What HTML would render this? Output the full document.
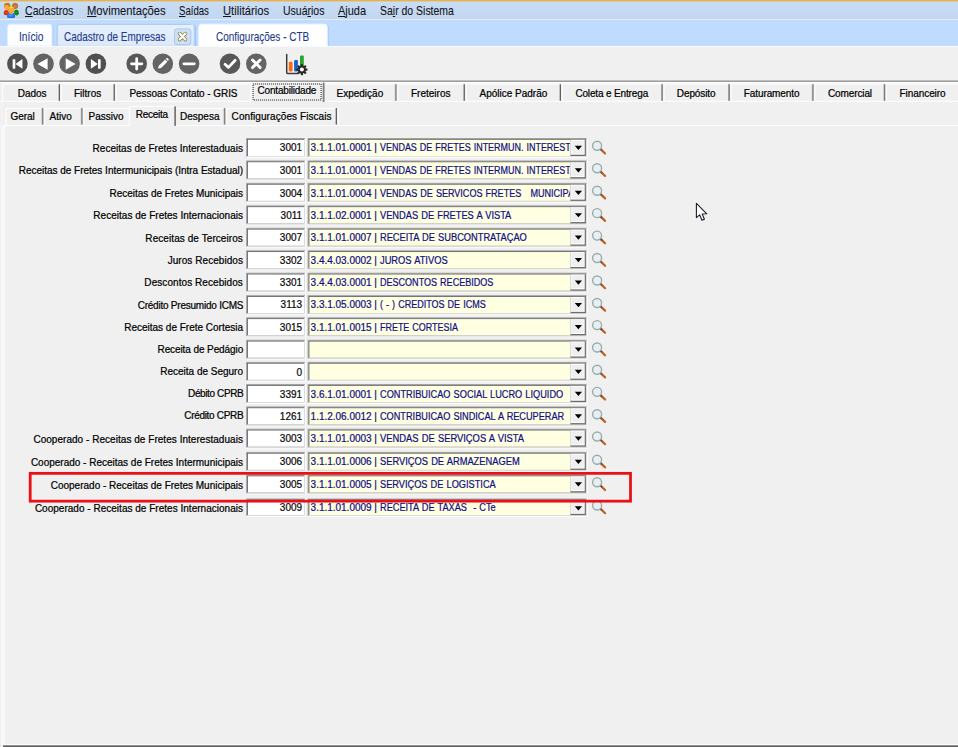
<!DOCTYPE html><html lang="pt-BR"><head><meta charset="utf-8"><title>Configurações - CTB</title><style>
*{box-sizing:border-box;margin:0;padding:0}
html,body{width:958px;height:747px;overflow:hidden;background:#f0f0f0}
body{position:relative;font-family:"Liberation Sans",sans-serif;font-size:10px;color:#000;-webkit-text-stroke:0.22px currentColor}
.a{position:absolute}
#g{position:absolute;left:0;top:0}
.m{-webkit-text-stroke:0.1px currentColor;position:absolute;top:4px;font-size:12.4px;line-height:14px;height:14px;white-space:pre;color:#15151c;transform-origin:0 0}
.m u{text-decoration:underline;text-underline-offset:1px}
.tt{-webkit-text-stroke:0.1px currentColor;position:absolute;top:29.6px;font-size:11.9px;line-height:14px;height:14px;white-space:pre;color:#1f3a8a;transform-origin:0 0}
.ot{position:absolute;font-size:10px;line-height:12px;white-space:pre}
.lbl{position:absolute;right:715px;text-align:right;white-space:pre;line-height:12px;height:12px;font-size:10px}
.nt{position:absolute;right:655.9px;text-align:right;white-space:pre;line-height:12px;height:12px;font-size:10px;color:#0a0a0a}
.nm{display:inline-block;transform-origin:0 50%;word-spacing:0.6px}
.tx{position:absolute;left:310.6px;line-height:12px;font-size:10px;color:#10108a;white-space:pre;width:259.2px;overflow:hidden;height:13px}
</style></head><body>
<svg id="g" width="958" height="747" viewBox="0 0 958 747">
<defs><linearGradient id="mg" x1="0" y1="0" x2="0" y2="1"><stop offset="0" stop-color="#c9ddf4"/><stop offset="1" stop-color="#c1d7f0"/></linearGradient><linearGradient id="tg" x1="0" y1="0" x2="0" y2="1"><stop offset="0" stop-color="#e6f0fd"/><stop offset="1" stop-color="#dce9fa"/></linearGradient><radialGradient id="go" cx="40%" cy="35%" r="70%"><stop offset="0" stop-color="#ffc04a"/><stop offset="1" stop-color="#d8831c"/></radialGradient><radialGradient id="gb" cx="40%" cy="35%" r="70%"><stop offset="0" stop-color="#d89a50"/><stop offset="1" stop-color="#b87028"/></radialGradient><linearGradient id="hg" x1="0" y1="0" x2="1" y2="1"><stop offset="0" stop-color="#5a3212"/><stop offset=".35" stop-color="#b05a1c"/><stop offset="1" stop-color="#c2641e"/></linearGradient><g id="mag"><path d="M9.7 11.3 L14.1 15.5" stroke="url(#hg)" stroke-width="2.2" stroke-linecap="round"/><circle cx="6.1" cy="7.8" r="4.5" fill="#e9eff1" stroke="#98adaf" stroke-width="1.4"/></g></defs>
<rect x="0.00" y="1.30" width="958.00" height="18.20" fill="url(#mg)"/>
<rect x="0.00" y="0.00" width="958.00" height="1.50" fill="#e2b255"/>
<rect x="0.00" y="19.00" width="958.00" height="1.00" fill="#e8ebf1"/>
<rect x="0.00" y="20.00" width="958.00" height="26.00" fill="#bfdbff"/>
<g>
<defs>
<radialGradient id="rh1" cx="38%" cy="62%" r="65%"><stop offset="0" stop-color="#ffb848"/><stop offset=".55" stop-color="#f09a28"/><stop offset="1" stop-color="#b87010"/></radialGradient>
<radialGradient id="rh2" cx="50%" cy="55%" r="60%"><stop offset="0" stop-color="#d08a3c"/><stop offset="1" stop-color="#a8682a"/></radialGradient>
<radialGradient id="rh3" cx="50%" cy="60%" r="60%"><stop offset="0" stop-color="#ffb44a"/><stop offset="1" stop-color="#ee9426"/></radialGradient>
<radialGradient id="rr" cx="55%" cy="50%" r="60%"><stop offset="0" stop-color="#ff4412"/><stop offset="1" stop-color="#cc1c08"/></radialGradient>
<radialGradient id="rg" cx="45%" cy="50%" r="60%"><stop offset="0" stop-color="#1c9a24"/><stop offset="1" stop-color="#0a7412"/></radialGradient>
<radialGradient id="rb" cx="45%" cy="45%" r="65%"><stop offset="0" stop-color="#46a2ff"/><stop offset="1" stop-color="#0a62d8"/></radialGradient>
</defs>
<path d="M3.8 13.4 Q3.6 10 6.4 9.9 Q9 10 9 13 Q8.8 15.4 6.4 15.3 Q4 15.2 3.8 13.4Z" fill="url(#rr)"/>
<path d="M14 13 Q14 9.8 16.4 9.7 Q18.9 9.9 18.8 13.2 Q18.6 15.5 16.4 15.5 Q14.2 15.4 14 13Z" fill="url(#rg)"/>
<circle cx="7.1" cy="6.2" r="3.2" fill="url(#rh1)"/>
<path d="M4 5.6 Q4.4 3 7.1 3 Q9.9 3 10.3 5.8 Q8.6 4.4 6.6 5 Q5 5.4 4 5.6Z" fill="#b8700e" opacity=".75"/>
<circle cx="15.1" cy="6.1" r="3.05" fill="url(#rh2)"/>
<path d="M7.1 17.4 Q6.8 13.4 9.2 13 L11.2 14.2 L13.2 13 Q15.4 13.4 15 17.4 Q11 18.6 7.1 17.4Z" fill="url(#rb)"/>
<path d="M10 12 L12.4 12 L12.2 13.3 L11.2 14.2 L10.2 13.3Z" fill="#f6a030"/>
<circle cx="11.2" cy="9.7" r="3.2" fill="url(#rh3)"/>
<path d="M8.2 8.9 Q8.6 6.7 11.2 6.6 Q13.6 6.7 14.1 8.6 Q11.2 7.4 8.2 8.9Z" fill="#f8dc14"/>
</g>
<path d="M9.20 46 V27.40 Q9.20 24.80 11.80 24.80 H51.00 Q53.60 24.80 53.60 27.40 V46Z" fill="#a9c9f5"/>
<path d="M7.60 46 V26.80 Q7.60 24.20 10.20 24.20 H49.40 Q52.00 24.20 52.00 26.80 V46Z" fill="#fdfeff" stroke="#e2eefc" stroke-width="1"/>
<path d="M59.20 46 V27.40 Q59.20 24.80 61.80 24.80 H193.40 Q196.00 24.80 196.00 27.40 V46Z" fill="#9fc3f5"/>
<path d="M57.20 46 V26.80 Q57.20 24.20 59.80 24.20 H191.40 Q194.00 24.20 194.00 26.80 V46Z" fill="url(#tg)" stroke="#c6dcf8" stroke-width="1"/>
<path d="M57.2 46 V26.8 Q57.2 24.4 59.8 24.4 H191.4" fill="none" stroke="#aac9f0" stroke-width="1"/>
<path d="M200.40 46 V27.40 Q200.40 24.80 203.00 24.80 H326.20 Q328.80 24.80 328.80 27.40 V46Z" fill="#a9c9f5"/>
<path d="M198.80 46 V26.80 Q198.80 24.20 201.40 24.20 H324.60 Q327.20 24.20 327.20 26.80 V46Z" fill="#ffffff" stroke="#eef8fd" stroke-width="1"/>
<rect x="174.6" y="28.9" width="16.2" height="15.8" rx="2.4" fill="#cfe0f6" stroke="#a9c6ec" stroke-width="1"/>
<g transform="translate(176 30)"><path d="M3.6 3.6 L9.4 9.6 M9.4 3.6 L3.6 9.6" stroke="#8f8658" stroke-width="3.7" stroke-linecap="round"/><path d="M3.6 3.6 L9.4 9.6 M9.4 3.6 L3.6 9.6" stroke="#fffef4" stroke-width="2.1" stroke-linecap="round"/></g>
<g transform="translate(7.1 53.5)"><circle cx="10.3" cy="10.3" r="10.3" fill="#505050"/><g transform="translate(10.3 10.3) scale(0.95) translate(-10.3 -10.3)"><rect x="5.3" y="5.4" width="2.8" height="10" rx=".6" fill="#fff"/><path d="M8.3 10.4 L15.6 5.2 L15.6 15.6Z" fill="#fff"/></g></g>
<g transform="translate(33.2 53.5)"><circle cx="10.3" cy="10.3" r="10.3" fill="#646464"/><g transform="translate(10.3 10.3) scale(1.06) translate(-10.3 -10.3)"><path d="M4.6 10.4 L14.2 5 L14.2 15.8Z" fill="#fff"/></g></g>
<g transform="translate(59.3 53.5)"><circle cx="10.3" cy="10.3" r="10.3" fill="#646464"/><g transform="translate(10.3 10.3) scale(1.06) translate(-10.3 -10.3)"><path d="M16 10.4 L6.6 5 L6.6 15.8Z" fill="#fff"/></g></g>
<g transform="translate(85.6 53.5)"><circle cx="10.3" cy="10.3" r="10.3" fill="#505050"/><g transform="translate(10.3 10.3) scale(0.95) translate(-10.3 -10.3)"><rect x="12.5" y="5.4" width="2.8" height="10" rx=".6" fill="#fff"/><path d="M12.3 10.4 L5 5.2 L5 15.6Z" fill="#fff"/></g></g>
<g transform="translate(126.4 53.5)"><circle cx="10.3" cy="10.3" r="10.3" fill="#585858"/><g transform="translate(10.3 10.3) scale(1.02) translate(-10.3 -10.3)"><path d="M10.3 5.2V15.4M5.2 10.3H15.4" stroke="#fff" stroke-width="2.7" stroke-linecap="round"/></g></g>
<g transform="translate(152.5 53.5)"><circle cx="10.3" cy="10.3" r="10.3" fill="#646464"/><g transform="translate(10.3 10.3) scale(1.02) translate(-10.3 -10.3)"><path d="M5.6 15 L6.4 12.2 L12.6 6 L14.8 8.2 L8.6 14.4Z" fill="#fff"/><path d="M13.2 5.4 L14 4.7 Q14.6 4.3 15.2 4.9 L15.9 5.6 Q16.4 6.2 15.9 6.8 L15.3 7.5Z" fill="#fff"/></g></g>
<g transform="translate(178.8 53.5)"><circle cx="10.3" cy="10.3" r="10.3" fill="#646464"/><g transform="translate(10.3 10.3) scale(1.02) translate(-10.3 -10.3)"><path d="M5.2 10.3H15.4" stroke="#fff" stroke-width="2.7" stroke-linecap="round"/></g></g>
<g transform="translate(219.7 53.5)"><circle cx="10.3" cy="10.3" r="10.3" fill="#585858"/><g transform="translate(10.3 10.3) scale(1.02) translate(-10.3 -10.3)"><path d="M5.4 10.8 L8.8 13.8 L15.4 6.8" stroke="#fff" stroke-width="2.7" fill="none" stroke-linecap="round" stroke-linejoin="round"/></g></g>
<g transform="translate(246.0 53.5)"><circle cx="10.3" cy="10.3" r="10.3" fill="#646464"/><g transform="translate(10.3 10.3) scale(1.02) translate(-10.3 -10.3)"><path d="M6.6 6.6 L14 14 M14 6.6 L6.6 14" stroke="#fff" stroke-width="2.9" stroke-linecap="round"/></g></g>
<g>
<path d="M286.7 54.4 V72.6 Q286.7 73.4 287.5 73.4 H298" stroke="#3a3a3a" stroke-width="1.5" fill="none" stroke-linecap="round"/>
<rect x="288.8" y="61.8" width="3.8" height="9.6" rx="1" fill="#ff6a10"/>
<rect x="294.1" y="60" width="3.8" height="11.4" rx="1" fill="#1464c8"/>
<rect x="300" y="55.6" width="3.8" height="11" rx="1" fill="#2ea32e"/>
<g transform="translate(301.9 69.6)" fill="#2a2a2a">
<circle r="4" />
<g id="tth"><rect x="-1.1" y="-5.6" width="2.2" height="11.2" rx=".4"/></g>
<use href="#tth" transform="rotate(45)"/><use href="#tth" transform="rotate(90)"/><use href="#tth" transform="rotate(135)"/>
<circle r="2" fill="#fff"/>
</g></g>
<rect x="0.00" y="80.40" width="958.00" height="1.60" fill="#9e9e9e"/>
<rect x="0.00" y="82.00" width="958.00" height="1.00" fill="#fff"/>
<rect x="0.00" y="46.00" width="958.00" height="1.00" fill="#f9fbfe"/>
<rect x="2.50" y="83.40" width="248.00" height="1.00" fill="#fff"/>
<rect x="324.00" y="83.40" width="634.00" height="1.00" fill="#fff"/>
<rect x="2.20" y="83.80" width="1.00" height="17.40" fill="#fff"/>
<rect x="0.00" y="100.80" width="251.00" height="1.00" fill="#fff"/>
<rect x="324.00" y="100.80" width="634.00" height="1.00" fill="#fff"/>
<rect x="250.60" y="82.00" width="72.40" height="1.00" fill="#fff"/>
<rect x="250.40" y="82.20" width="1.00" height="19.60" fill="#fff"/>
<rect x="322.60" y="82.60" width="0.80" height="19.40" fill="#a0a0a0"/>
<rect x="323.30" y="82.60" width="1.10" height="19.40" fill="#5a5a5a"/>
<rect x="253.1" y="84" width="68" height="16" fill="none" stroke="#222" stroke-width="1" stroke-dasharray="1 1"/>
<rect x="58.30" y="84.20" width="0.80" height="16.60" fill="#adadad"/>
<rect x="59.00" y="84.20" width="1.00" height="16.60" fill="#626262"/>
<rect x="61.00" y="84.60" width="0.90" height="16.20" fill="#fdfdfd"/>
<rect x="113.20" y="84.20" width="0.80" height="16.60" fill="#adadad"/>
<rect x="113.90" y="84.20" width="1.00" height="16.60" fill="#626262"/>
<rect x="115.90" y="84.60" width="0.90" height="16.20" fill="#fdfdfd"/>
<rect x="394.80" y="84.20" width="0.80" height="16.60" fill="#adadad"/>
<rect x="395.50" y="84.20" width="1.00" height="16.60" fill="#626262"/>
<rect x="397.50" y="84.60" width="0.90" height="16.20" fill="#fdfdfd"/>
<rect x="463.20" y="84.20" width="0.80" height="16.60" fill="#adadad"/>
<rect x="463.90" y="84.20" width="1.00" height="16.60" fill="#626262"/>
<rect x="465.90" y="84.60" width="0.90" height="16.20" fill="#fdfdfd"/>
<rect x="559.30" y="84.20" width="0.80" height="16.60" fill="#adadad"/>
<rect x="560.00" y="84.20" width="1.00" height="16.60" fill="#626262"/>
<rect x="562.00" y="84.60" width="0.90" height="16.20" fill="#fdfdfd"/>
<rect x="661.00" y="84.20" width="0.80" height="16.60" fill="#adadad"/>
<rect x="661.70" y="84.20" width="1.00" height="16.60" fill="#626262"/>
<rect x="663.70" y="84.60" width="0.90" height="16.20" fill="#fdfdfd"/>
<rect x="728.00" y="84.20" width="0.80" height="16.60" fill="#adadad"/>
<rect x="728.70" y="84.20" width="1.00" height="16.60" fill="#626262"/>
<rect x="730.70" y="84.60" width="0.90" height="16.20" fill="#fdfdfd"/>
<rect x="811.80" y="84.20" width="0.80" height="16.60" fill="#adadad"/>
<rect x="812.50" y="84.20" width="1.00" height="16.60" fill="#626262"/>
<rect x="814.50" y="84.60" width="0.90" height="16.20" fill="#fdfdfd"/>
<rect x="883.50" y="84.20" width="0.80" height="16.60" fill="#adadad"/>
<rect x="884.20" y="84.20" width="1.00" height="16.60" fill="#626262"/>
<rect x="886.20" y="84.60" width="0.90" height="16.20" fill="#fdfdfd"/>
<rect x="5.80" y="108.00" width="123.00" height="1.00" fill="#fff"/>
<rect x="176.00" y="108.00" width="161.00" height="1.00" fill="#fff"/>
<rect x="5.40" y="108.20" width="1.00" height="17.00" fill="#fff"/>
<rect x="3.60" y="125.00" width="125.40" height="1.00" fill="#fff"/>
<rect x="176.00" y="125.00" width="782.00" height="1.00" fill="#fff"/>
<rect x="3.50" y="125.00" width="1.00" height="620.00" fill="#fff"/>
<rect x="129.00" y="105.90" width="45.40" height="1.00" fill="#fff"/>
<rect x="128.80" y="106.10" width="1.00" height="19.60" fill="#fff"/>
<rect x="174.00" y="106.40" width="0.80" height="19.40" fill="#a0a0a0"/>
<rect x="174.70" y="106.40" width="1.10" height="19.40" fill="#5a5a5a"/>
<rect x="41.60" y="108.00" width="0.80" height="16.60" fill="#adadad"/>
<rect x="42.30" y="108.00" width="1.00" height="16.60" fill="#626262"/>
<rect x="44.30" y="108.40" width="0.90" height="16.20" fill="#fdfdfd"/>
<rect x="80.80" y="108.00" width="0.80" height="16.60" fill="#adadad"/>
<rect x="81.50" y="108.00" width="1.00" height="16.60" fill="#626262"/>
<rect x="83.50" y="108.40" width="0.90" height="16.20" fill="#fdfdfd"/>
<rect x="223.60" y="108.00" width="0.80" height="16.60" fill="#adadad"/>
<rect x="224.30" y="108.00" width="1.00" height="16.60" fill="#626262"/>
<rect x="226.30" y="108.40" width="0.90" height="16.20" fill="#fdfdfd"/>
<rect x="335.30" y="108.00" width="0.80" height="16.60" fill="#adadad"/>
<rect x="336.00" y="108.00" width="1.00" height="16.60" fill="#626262"/>
<rect x="338.00" y="108.40" width="0.90" height="16.20" fill="#fdfdfd"/>
<rect x="0.00" y="102.00" width="0.60" height="645.00" fill="#dedede"/>
<rect x="0.60" y="102.00" width="0.80" height="643.00" fill="#fff"/>
<rect x="1.40" y="126.00" width="2.20" height="621.00" fill="#f8f8f8"/>
<rect x="3.60" y="744.20" width="955.00" height="0.90" fill="#fff"/>
<rect x="3.00" y="745.10" width="955.00" height="1.00" fill="#858585"/>
<rect x="3.00" y="746.00" width="955.00" height="1.00" fill="#646464"/>
<rect x="246.10" y="138.00" width="59.80" height="19.80" fill="#ffffff"/>
<rect x="246.10" y="138.00" width="58.90" height="18.90" fill="#a0a0a0"/>
<rect x="247.00" y="138.90" width="58.00" height="18.00" fill="#e6e6e6"/>
<rect x="247.00" y="138.90" width="57.10" height="17.10" fill="#696969"/>
<rect x="247.90" y="139.80" width="56.20" height="16.20" fill="#fff"/>
<rect x="307.60" y="138.00" width="280.10" height="19.80" fill="#ffffff"/>
<rect x="307.60" y="138.00" width="279.20" height="18.90" fill="#a0a0a0"/>
<rect x="308.50" y="138.90" width="278.30" height="18.00" fill="#e6e6e6"/>
<rect x="308.50" y="138.90" width="277.40" height="17.10" fill="#696969"/>
<rect x="309.40" y="139.80" width="276.50" height="16.20" fill="#ffffe1"/>
<rect x="570.40" y="139.80" width="15.50" height="16.20" fill="#6e6e6e"/>
<rect x="570.40" y="139.80" width="14.30" height="14.90" fill="#fff"/>
<rect x="571.40" y="140.80" width="12.30" height="12.90" fill="#efefef"/>
<path d="M574.8 145.80 H582 L578.4 150.00Z" fill="#000"/>
<use href="#mag" x="591" y="138.00"/>
<rect x="246.10" y="160.45" width="59.80" height="19.80" fill="#ffffff"/>
<rect x="246.10" y="160.45" width="58.90" height="18.90" fill="#a0a0a0"/>
<rect x="247.00" y="161.35" width="58.00" height="18.00" fill="#e6e6e6"/>
<rect x="247.00" y="161.35" width="57.10" height="17.10" fill="#696969"/>
<rect x="247.90" y="162.25" width="56.20" height="16.20" fill="#fff"/>
<rect x="307.60" y="160.45" width="280.10" height="19.80" fill="#ffffff"/>
<rect x="307.60" y="160.45" width="279.20" height="18.90" fill="#a0a0a0"/>
<rect x="308.50" y="161.35" width="278.30" height="18.00" fill="#e6e6e6"/>
<rect x="308.50" y="161.35" width="277.40" height="17.10" fill="#696969"/>
<rect x="309.40" y="162.25" width="276.50" height="16.20" fill="#ffffe1"/>
<rect x="570.40" y="162.25" width="15.50" height="16.20" fill="#6e6e6e"/>
<rect x="570.40" y="162.25" width="14.30" height="14.90" fill="#fff"/>
<rect x="571.40" y="163.25" width="12.30" height="12.90" fill="#efefef"/>
<path d="M574.8 168.25 H582 L578.4 172.45Z" fill="#000"/>
<use href="#mag" x="591" y="160.45"/>
<rect x="246.10" y="182.90" width="59.80" height="19.80" fill="#ffffff"/>
<rect x="246.10" y="182.90" width="58.90" height="18.90" fill="#a0a0a0"/>
<rect x="247.00" y="183.80" width="58.00" height="18.00" fill="#e6e6e6"/>
<rect x="247.00" y="183.80" width="57.10" height="17.10" fill="#696969"/>
<rect x="247.90" y="184.70" width="56.20" height="16.20" fill="#fff"/>
<rect x="307.60" y="182.90" width="280.10" height="19.80" fill="#ffffff"/>
<rect x="307.60" y="182.90" width="279.20" height="18.90" fill="#a0a0a0"/>
<rect x="308.50" y="183.80" width="278.30" height="18.00" fill="#e6e6e6"/>
<rect x="308.50" y="183.80" width="277.40" height="17.10" fill="#696969"/>
<rect x="309.40" y="184.70" width="276.50" height="16.20" fill="#ffffe1"/>
<rect x="570.40" y="184.70" width="15.50" height="16.20" fill="#6e6e6e"/>
<rect x="570.40" y="184.70" width="14.30" height="14.90" fill="#fff"/>
<rect x="571.40" y="185.70" width="12.30" height="12.90" fill="#efefef"/>
<path d="M574.8 190.70 H582 L578.4 194.90Z" fill="#000"/>
<use href="#mag" x="591" y="182.90"/>
<rect x="246.10" y="205.35" width="59.80" height="19.80" fill="#ffffff"/>
<rect x="246.10" y="205.35" width="58.90" height="18.90" fill="#a0a0a0"/>
<rect x="247.00" y="206.25" width="58.00" height="18.00" fill="#e6e6e6"/>
<rect x="247.00" y="206.25" width="57.10" height="17.10" fill="#696969"/>
<rect x="247.90" y="207.15" width="56.20" height="16.20" fill="#fff"/>
<rect x="307.60" y="205.35" width="280.10" height="19.80" fill="#ffffff"/>
<rect x="307.60" y="205.35" width="279.20" height="18.90" fill="#a0a0a0"/>
<rect x="308.50" y="206.25" width="278.30" height="18.00" fill="#e6e6e6"/>
<rect x="308.50" y="206.25" width="277.40" height="17.10" fill="#696969"/>
<rect x="309.40" y="207.15" width="276.50" height="16.20" fill="#ffffe1"/>
<rect x="570.40" y="207.15" width="15.50" height="16.20" fill="#6e6e6e"/>
<rect x="570.40" y="207.15" width="14.30" height="14.90" fill="#fff"/>
<rect x="571.40" y="208.15" width="12.30" height="12.90" fill="#efefef"/>
<path d="M574.8 213.15 H582 L578.4 217.35Z" fill="#000"/>
<use href="#mag" x="591" y="205.35"/>
<rect x="246.10" y="227.80" width="59.80" height="19.80" fill="#ffffff"/>
<rect x="246.10" y="227.80" width="58.90" height="18.90" fill="#a0a0a0"/>
<rect x="247.00" y="228.70" width="58.00" height="18.00" fill="#e6e6e6"/>
<rect x="247.00" y="228.70" width="57.10" height="17.10" fill="#696969"/>
<rect x="247.90" y="229.60" width="56.20" height="16.20" fill="#fff"/>
<rect x="307.60" y="227.80" width="280.10" height="19.80" fill="#ffffff"/>
<rect x="307.60" y="227.80" width="279.20" height="18.90" fill="#a0a0a0"/>
<rect x="308.50" y="228.70" width="278.30" height="18.00" fill="#e6e6e6"/>
<rect x="308.50" y="228.70" width="277.40" height="17.10" fill="#696969"/>
<rect x="309.40" y="229.60" width="276.50" height="16.20" fill="#ffffe1"/>
<rect x="570.40" y="229.60" width="15.50" height="16.20" fill="#6e6e6e"/>
<rect x="570.40" y="229.60" width="14.30" height="14.90" fill="#fff"/>
<rect x="571.40" y="230.60" width="12.30" height="12.90" fill="#efefef"/>
<path d="M574.8 235.60 H582 L578.4 239.80Z" fill="#000"/>
<use href="#mag" x="591" y="227.80"/>
<rect x="246.10" y="250.25" width="59.80" height="19.80" fill="#ffffff"/>
<rect x="246.10" y="250.25" width="58.90" height="18.90" fill="#a0a0a0"/>
<rect x="247.00" y="251.15" width="58.00" height="18.00" fill="#e6e6e6"/>
<rect x="247.00" y="251.15" width="57.10" height="17.10" fill="#696969"/>
<rect x="247.90" y="252.05" width="56.20" height="16.20" fill="#fff"/>
<rect x="307.60" y="250.25" width="280.10" height="19.80" fill="#ffffff"/>
<rect x="307.60" y="250.25" width="279.20" height="18.90" fill="#a0a0a0"/>
<rect x="308.50" y="251.15" width="278.30" height="18.00" fill="#e6e6e6"/>
<rect x="308.50" y="251.15" width="277.40" height="17.10" fill="#696969"/>
<rect x="309.40" y="252.05" width="276.50" height="16.20" fill="#ffffe1"/>
<rect x="570.40" y="252.05" width="15.50" height="16.20" fill="#6e6e6e"/>
<rect x="570.40" y="252.05" width="14.30" height="14.90" fill="#fff"/>
<rect x="571.40" y="253.05" width="12.30" height="12.90" fill="#efefef"/>
<path d="M574.8 258.05 H582 L578.4 262.25Z" fill="#000"/>
<use href="#mag" x="591" y="250.25"/>
<rect x="246.10" y="272.70" width="59.80" height="19.80" fill="#ffffff"/>
<rect x="246.10" y="272.70" width="58.90" height="18.90" fill="#a0a0a0"/>
<rect x="247.00" y="273.60" width="58.00" height="18.00" fill="#e6e6e6"/>
<rect x="247.00" y="273.60" width="57.10" height="17.10" fill="#696969"/>
<rect x="247.90" y="274.50" width="56.20" height="16.20" fill="#fff"/>
<rect x="307.60" y="272.70" width="280.10" height="19.80" fill="#ffffff"/>
<rect x="307.60" y="272.70" width="279.20" height="18.90" fill="#a0a0a0"/>
<rect x="308.50" y="273.60" width="278.30" height="18.00" fill="#e6e6e6"/>
<rect x="308.50" y="273.60" width="277.40" height="17.10" fill="#696969"/>
<rect x="309.40" y="274.50" width="276.50" height="16.20" fill="#ffffe1"/>
<rect x="570.40" y="274.50" width="15.50" height="16.20" fill="#6e6e6e"/>
<rect x="570.40" y="274.50" width="14.30" height="14.90" fill="#fff"/>
<rect x="571.40" y="275.50" width="12.30" height="12.90" fill="#efefef"/>
<path d="M574.8 280.50 H582 L578.4 284.70Z" fill="#000"/>
<use href="#mag" x="591" y="272.70"/>
<rect x="246.10" y="295.15" width="59.80" height="19.80" fill="#ffffff"/>
<rect x="246.10" y="295.15" width="58.90" height="18.90" fill="#a0a0a0"/>
<rect x="247.00" y="296.05" width="58.00" height="18.00" fill="#e6e6e6"/>
<rect x="247.00" y="296.05" width="57.10" height="17.10" fill="#696969"/>
<rect x="247.90" y="296.95" width="56.20" height="16.20" fill="#fff"/>
<rect x="307.60" y="295.15" width="280.10" height="19.80" fill="#ffffff"/>
<rect x="307.60" y="295.15" width="279.20" height="18.90" fill="#a0a0a0"/>
<rect x="308.50" y="296.05" width="278.30" height="18.00" fill="#e6e6e6"/>
<rect x="308.50" y="296.05" width="277.40" height="17.10" fill="#696969"/>
<rect x="309.40" y="296.95" width="276.50" height="16.20" fill="#ffffe1"/>
<rect x="570.40" y="296.95" width="15.50" height="16.20" fill="#6e6e6e"/>
<rect x="570.40" y="296.95" width="14.30" height="14.90" fill="#fff"/>
<rect x="571.40" y="297.95" width="12.30" height="12.90" fill="#efefef"/>
<path d="M574.8 302.95 H582 L578.4 307.15Z" fill="#000"/>
<use href="#mag" x="591" y="295.15"/>
<rect x="246.10" y="317.30" width="59.80" height="19.80" fill="#ffffff"/>
<rect x="246.10" y="317.30" width="58.90" height="18.90" fill="#a0a0a0"/>
<rect x="247.00" y="318.20" width="58.00" height="18.00" fill="#e6e6e6"/>
<rect x="247.00" y="318.20" width="57.10" height="17.10" fill="#696969"/>
<rect x="247.90" y="319.10" width="56.20" height="16.20" fill="#fff"/>
<rect x="307.60" y="317.30" width="280.10" height="19.80" fill="#ffffff"/>
<rect x="307.60" y="317.30" width="279.20" height="18.90" fill="#a0a0a0"/>
<rect x="308.50" y="318.20" width="278.30" height="18.00" fill="#e6e6e6"/>
<rect x="308.50" y="318.20" width="277.40" height="17.10" fill="#696969"/>
<rect x="309.40" y="319.10" width="276.50" height="16.20" fill="#ffffe1"/>
<rect x="570.40" y="319.10" width="15.50" height="16.20" fill="#6e6e6e"/>
<rect x="570.40" y="319.10" width="14.30" height="14.90" fill="#fff"/>
<rect x="571.40" y="320.10" width="12.30" height="12.90" fill="#efefef"/>
<path d="M574.8 325.10 H582 L578.4 329.30Z" fill="#000"/>
<use href="#mag" x="591" y="317.30"/>
<rect x="246.10" y="339.75" width="59.80" height="19.80" fill="#ffffff"/>
<rect x="246.10" y="339.75" width="58.90" height="18.90" fill="#a0a0a0"/>
<rect x="247.00" y="340.65" width="58.00" height="18.00" fill="#e6e6e6"/>
<rect x="247.00" y="340.65" width="57.10" height="17.10" fill="#696969"/>
<rect x="247.90" y="341.55" width="56.20" height="16.20" fill="#fff"/>
<rect x="307.60" y="339.75" width="280.10" height="19.80" fill="#ffffff"/>
<rect x="307.60" y="339.75" width="279.20" height="18.90" fill="#a0a0a0"/>
<rect x="308.50" y="340.65" width="278.30" height="18.00" fill="#e6e6e6"/>
<rect x="308.50" y="340.65" width="277.40" height="17.10" fill="#696969"/>
<rect x="309.40" y="341.55" width="276.50" height="16.20" fill="#ffffe1"/>
<rect x="570.40" y="341.55" width="15.50" height="16.20" fill="#6e6e6e"/>
<rect x="570.40" y="341.55" width="14.30" height="14.90" fill="#fff"/>
<rect x="571.40" y="342.55" width="12.30" height="12.90" fill="#efefef"/>
<path d="M574.8 347.55 H582 L578.4 351.75Z" fill="#000"/>
<use href="#mag" x="591" y="339.75"/>
<rect x="246.10" y="361.90" width="59.80" height="19.80" fill="#ffffff"/>
<rect x="246.10" y="361.90" width="58.90" height="18.90" fill="#a0a0a0"/>
<rect x="247.00" y="362.80" width="58.00" height="18.00" fill="#e6e6e6"/>
<rect x="247.00" y="362.80" width="57.10" height="17.10" fill="#696969"/>
<rect x="247.90" y="363.70" width="56.20" height="16.20" fill="#fff"/>
<rect x="307.60" y="361.90" width="280.10" height="19.80" fill="#ffffff"/>
<rect x="307.60" y="361.90" width="279.20" height="18.90" fill="#a0a0a0"/>
<rect x="308.50" y="362.80" width="278.30" height="18.00" fill="#e6e6e6"/>
<rect x="308.50" y="362.80" width="277.40" height="17.10" fill="#696969"/>
<rect x="309.40" y="363.70" width="276.50" height="16.20" fill="#ffffe1"/>
<rect x="570.40" y="363.70" width="15.50" height="16.20" fill="#6e6e6e"/>
<rect x="570.40" y="363.70" width="14.30" height="14.90" fill="#fff"/>
<rect x="571.40" y="364.70" width="12.30" height="12.90" fill="#efefef"/>
<path d="M574.8 369.70 H582 L578.4 373.90Z" fill="#000"/>
<use href="#mag" x="591" y="361.90"/>
<rect x="246.10" y="384.05" width="59.80" height="19.80" fill="#ffffff"/>
<rect x="246.10" y="384.05" width="58.90" height="18.90" fill="#a0a0a0"/>
<rect x="247.00" y="384.95" width="58.00" height="18.00" fill="#e6e6e6"/>
<rect x="247.00" y="384.95" width="57.10" height="17.10" fill="#696969"/>
<rect x="247.90" y="385.85" width="56.20" height="16.20" fill="#fff"/>
<rect x="307.60" y="384.05" width="280.10" height="19.80" fill="#ffffff"/>
<rect x="307.60" y="384.05" width="279.20" height="18.90" fill="#a0a0a0"/>
<rect x="308.50" y="384.95" width="278.30" height="18.00" fill="#e6e6e6"/>
<rect x="308.50" y="384.95" width="277.40" height="17.10" fill="#696969"/>
<rect x="309.40" y="385.85" width="276.50" height="16.20" fill="#ffffe1"/>
<rect x="570.40" y="385.85" width="15.50" height="16.20" fill="#6e6e6e"/>
<rect x="570.40" y="385.85" width="14.30" height="14.90" fill="#fff"/>
<rect x="571.40" y="386.85" width="12.30" height="12.90" fill="#efefef"/>
<path d="M574.8 391.85 H582 L578.4 396.05Z" fill="#000"/>
<use href="#mag" x="591" y="384.05"/>
<rect x="246.10" y="406.40" width="59.80" height="19.80" fill="#ffffff"/>
<rect x="246.10" y="406.40" width="58.90" height="18.90" fill="#a0a0a0"/>
<rect x="247.00" y="407.30" width="58.00" height="18.00" fill="#e6e6e6"/>
<rect x="247.00" y="407.30" width="57.10" height="17.10" fill="#696969"/>
<rect x="247.90" y="408.20" width="56.20" height="16.20" fill="#fff"/>
<rect x="307.60" y="406.40" width="280.10" height="19.80" fill="#ffffff"/>
<rect x="307.60" y="406.40" width="279.20" height="18.90" fill="#a0a0a0"/>
<rect x="308.50" y="407.30" width="278.30" height="18.00" fill="#e6e6e6"/>
<rect x="308.50" y="407.30" width="277.40" height="17.10" fill="#696969"/>
<rect x="309.40" y="408.20" width="276.50" height="16.20" fill="#ffffe1"/>
<rect x="570.40" y="408.20" width="15.50" height="16.20" fill="#6e6e6e"/>
<rect x="570.40" y="408.20" width="14.30" height="14.90" fill="#fff"/>
<rect x="571.40" y="409.20" width="12.30" height="12.90" fill="#efefef"/>
<path d="M574.8 414.20 H582 L578.4 418.40Z" fill="#000"/>
<use href="#mag" x="591" y="406.40"/>
<rect x="246.10" y="428.70" width="59.80" height="19.80" fill="#ffffff"/>
<rect x="246.10" y="428.70" width="58.90" height="18.90" fill="#a0a0a0"/>
<rect x="247.00" y="429.60" width="58.00" height="18.00" fill="#e6e6e6"/>
<rect x="247.00" y="429.60" width="57.10" height="17.10" fill="#696969"/>
<rect x="247.90" y="430.50" width="56.20" height="16.20" fill="#fff"/>
<rect x="307.60" y="428.70" width="280.10" height="19.80" fill="#ffffff"/>
<rect x="307.60" y="428.70" width="279.20" height="18.90" fill="#a0a0a0"/>
<rect x="308.50" y="429.60" width="278.30" height="18.00" fill="#e6e6e6"/>
<rect x="308.50" y="429.60" width="277.40" height="17.10" fill="#696969"/>
<rect x="309.40" y="430.50" width="276.50" height="16.20" fill="#ffffe1"/>
<rect x="570.40" y="430.50" width="15.50" height="16.20" fill="#6e6e6e"/>
<rect x="570.40" y="430.50" width="14.30" height="14.90" fill="#fff"/>
<rect x="571.40" y="431.50" width="12.30" height="12.90" fill="#efefef"/>
<path d="M574.8 436.50 H582 L578.4 440.70Z" fill="#000"/>
<use href="#mag" x="591" y="428.70"/>
<rect x="246.10" y="451.90" width="59.80" height="19.80" fill="#ffffff"/>
<rect x="246.10" y="451.90" width="58.90" height="18.90" fill="#a0a0a0"/>
<rect x="247.00" y="452.80" width="58.00" height="18.00" fill="#e6e6e6"/>
<rect x="247.00" y="452.80" width="57.10" height="17.10" fill="#696969"/>
<rect x="247.90" y="453.70" width="56.20" height="16.20" fill="#fff"/>
<rect x="307.60" y="451.90" width="280.10" height="19.80" fill="#ffffff"/>
<rect x="307.60" y="451.90" width="279.20" height="18.90" fill="#a0a0a0"/>
<rect x="308.50" y="452.80" width="278.30" height="18.00" fill="#e6e6e6"/>
<rect x="308.50" y="452.80" width="277.40" height="17.10" fill="#696969"/>
<rect x="309.40" y="453.70" width="276.50" height="16.20" fill="#ffffe1"/>
<rect x="570.40" y="453.70" width="15.50" height="16.20" fill="#6e6e6e"/>
<rect x="570.40" y="453.70" width="14.30" height="14.90" fill="#fff"/>
<rect x="571.40" y="454.70" width="12.30" height="12.90" fill="#efefef"/>
<path d="M574.8 459.70 H582 L578.4 463.90Z" fill="#000"/>
<use href="#mag" x="591" y="451.90"/>
<rect x="246.10" y="474.50" width="59.80" height="19.80" fill="#ffffff"/>
<rect x="246.10" y="474.50" width="58.90" height="18.90" fill="#a0a0a0"/>
<rect x="247.00" y="475.40" width="58.00" height="18.00" fill="#e6e6e6"/>
<rect x="247.00" y="475.40" width="57.10" height="17.10" fill="#696969"/>
<rect x="247.90" y="476.30" width="56.20" height="16.20" fill="#fff"/>
<rect x="307.60" y="474.50" width="280.10" height="19.80" fill="#ffffff"/>
<rect x="307.60" y="474.50" width="279.20" height="18.90" fill="#a0a0a0"/>
<rect x="308.50" y="475.40" width="278.30" height="18.00" fill="#e6e6e6"/>
<rect x="308.50" y="475.40" width="277.40" height="17.10" fill="#696969"/>
<rect x="309.40" y="476.30" width="276.50" height="16.20" fill="#ffffe1"/>
<rect x="570.40" y="476.30" width="15.50" height="16.20" fill="#6e6e6e"/>
<rect x="570.40" y="476.30" width="14.30" height="14.90" fill="#fff"/>
<rect x="571.40" y="477.30" width="12.30" height="12.90" fill="#efefef"/>
<path d="M574.8 482.30 H582 L578.4 486.50Z" fill="#000"/>
<use href="#mag" x="591" y="474.50"/>
<rect x="246.10" y="498.50" width="59.80" height="18.40" fill="#ffffff"/>
<rect x="246.10" y="498.50" width="58.90" height="17.50" fill="#a0a0a0"/>
<rect x="247.00" y="499.40" width="58.00" height="16.60" fill="#e6e6e6"/>
<rect x="247.00" y="499.40" width="57.10" height="15.70" fill="#696969"/>
<rect x="247.90" y="500.30" width="56.20" height="14.80" fill="#fff"/>
<rect x="307.60" y="498.50" width="280.10" height="18.40" fill="#ffffff"/>
<rect x="307.60" y="498.50" width="279.20" height="17.50" fill="#a0a0a0"/>
<rect x="308.50" y="499.40" width="278.30" height="16.60" fill="#e6e6e6"/>
<rect x="308.50" y="499.40" width="277.40" height="15.70" fill="#696969"/>
<rect x="309.40" y="500.30" width="276.50" height="14.80" fill="#ffffe1"/>
<rect x="570.40" y="500.30" width="15.50" height="14.80" fill="#6e6e6e"/>
<rect x="570.40" y="500.30" width="14.30" height="13.50" fill="#fff"/>
<rect x="571.40" y="501.30" width="12.30" height="11.50" fill="#efefef"/>
<path d="M574.8 506.30 H582 L578.4 510.50Z" fill="#000"/>
<use href="#mag" x="591" y="497.70"/>
<rect x="30.2" y="473.35" width="600.3" height="27.8" fill="none" stroke="#ea1018" stroke-width="2.8"/>
<path d="M696.4 203.4 V217.6 L699.6 214.8 L702 220.2 L704.4 219.2 L702.2 214 L706.8 213.8Z" fill="#fff" stroke="#1c1c2c" stroke-width="1.1" stroke-linejoin="round"/>
</svg>
<span class="m" id="m0" style="left:25px;transform:scaleX(0.8569)"><u>C</u>adastros</span>
<span class="m" id="m1" style="left:87px;transform:scaleX(0.9069)"><u>M</u>ovimentações</span>
<span class="m" id="m2" style="left:179.4px;transform:scaleX(0.7751)"><u>S</u>aídas</span>
<span class="m" id="m3" style="left:222.8px;transform:scaleX(0.9028)"><u>U</u>tilitários</span>
<span class="m" id="m4" style="left:282.6px;transform:scaleX(0.8462)">Usuá<u>r</u>ios</span>
<span class="m" id="m5" style="left:337.7px;transform:scaleX(0.8863)"><u>A</u>juda</span>
<span class="m" id="m6" style="left:379.6px;transform:scaleX(0.8447)">Sa<u>i</u>r do Sistema</span>
<span class="tt" id="tt0" style="left:18.5px;transform:scaleX(0.862)">Início</span>
<span class="tt" id="tt1" style="left:63.7px;transform:scaleX(0.8346)">Cadastro de Empresas</span>
<span class="tt" id="tt2" style="left:216.4px;transform:scaleX(0.8394)">Configurações - CTB</span>
<span class="ot" id="ot0" style="left:17.7px;top:87.7px;letter-spacing:0px">Dados</span>
<span class="ot" id="ot1" style="left:74px;top:87.7px;letter-spacing:0px">Filtros</span>
<span class="ot" id="ot2" style="left:129.5px;top:87.7px;letter-spacing:-0.07px">Pessoas Contato - GRIS</span>
<span class="ot" id="ot3" style="left:257.6px;top:85.4px;letter-spacing:-0.2px">Contabilidade</span>
<span class="ot" id="ot4" style="left:336.5px;top:87.7px;letter-spacing:0px">Expedição</span>
<span class="ot" id="ot5" style="left:411px;top:87.7px;letter-spacing:0px">Freteiros</span>
<span class="ot" id="ot6" style="left:479.5px;top:87.7px;letter-spacing:0px">Apólice Padrão</span>
<span class="ot" id="ot7" style="left:575.4px;top:87.7px;letter-spacing:-0.15px">Coleta e Entrega</span>
<span class="ot" id="ot8" style="left:676.8px;top:87.7px;letter-spacing:-0.1px">Depósito</span>
<span class="ot" id="ot9" style="left:743.8px;top:87.7px;letter-spacing:-0.1px">Faturamento</span>
<span class="ot" id="ot10" style="left:828px;top:87.7px;letter-spacing:-0.12px">Comercial</span>
<span class="ot" id="ot11" style="left:899.6px;top:87.7px;letter-spacing:-0.08px">Financeiro</span>
<span class="ot" id="it0" style="left:10.4px;top:110.8px;letter-spacing:0px">Geral</span>
<span class="ot" id="it1" style="left:49.5px;top:110.8px;letter-spacing:0px">Ativo</span>
<span class="ot" id="it2" style="left:88.5px;top:110.8px;letter-spacing:0px">Passivo</span>
<span class="ot" id="it3" style="left:135.7px;top:108.6px;letter-spacing:-0.25px">Receita</span>
<span class="ot" id="it4" style="left:180px;top:110.8px;letter-spacing:0px">Despesa</span>
<span class="ot" id="it5" style="left:231.6px;top:110.8px;letter-spacing:0.08px">Configurações Fiscais</span>
<span class="lbl" id="l0" style="top:143px;letter-spacing:0.027px;margin-right:0.027px">Receitas de Fretes Interestaduais</span>
<span class="nt" style="top:142px">3001</span>
<div class="tx" style="top:142px"><span id="c0" style="letter-spacing:-0.014px">3.1.1.01.0001 | </span><span id="n0" class="nm" style="transform:scaleX(0.8957)">VENDAS DE FRETES INTERMUN. INTERESTADUAL</span></div>
<span class="lbl" id="l1" style="top:165px;letter-spacing:-0.016px;margin-right:-0.016px">Receitas de Fretes Intermunicipais (Intra Estadual)</span>
<span class="nt" style="top:165px">3001</span>
<div class="tx" style="top:165px"><span id="c1" style="letter-spacing:-0.014px">3.1.1.01.0001 | </span><span id="n1" class="nm" style="transform:scaleX(0.8957)">VENDAS DE FRETES INTERMUN. INTERESTADUAL</span></div>
<span class="lbl" id="l2" style="top:188px;letter-spacing:-0.013px;margin-right:-0.013px">Receitas de Fretes Municipais</span>
<span class="nt" style="top:188px">3004</span>
<div class="tx" style="top:188px"><span id="c2" style="letter-spacing:-0.014px">3.1.1.01.0004 | </span><span id="n2" class="nm" style="transform:scaleX(0.9047)">VENDAS DE SERVICOS FRETES   MUNICIPAIS</span></div>
<span class="lbl" id="l3" style="top:210px;letter-spacing:0.02px;margin-right:0.02px">Receitas de Fretes Internacionais</span>
<span class="nt" style="top:210px">3011</span>
<div class="tx" style="top:210px"><span id="c3" style="letter-spacing:-0.014px">3.1.1.02.0001 | </span><span id="n3" class="nm" style="transform:scaleX(0.9266)">VENDAS DE FRETES A VISTA</span></div>
<span class="lbl" id="l4" style="top:233px;letter-spacing:0.076px;margin-right:0.076px">Receitas de Terceiros</span>
<span class="nt" style="top:232px">3007</span>
<div class="tx" style="top:232px"><span id="c4" style="letter-spacing:-0.014px">3.1.1.01.0007 | </span><span id="n4" class="nm" style="transform:scaleX(0.9265)">RECEITA DE SUBCONTRATAÇAO</span></div>
<span class="lbl" id="l5" style="top:255px;letter-spacing:0.051px;margin-right:0.051px">Juros Recebidos</span>
<span class="nt" style="top:255px">3302</span>
<div class="tx" style="top:255px"><span id="c5" style="letter-spacing:-0.014px">3.4.4.03.0002 | </span><span id="n5" class="nm" style="transform:scaleX(0.9304)">JUROS ATIVOS</span></div>
<span class="lbl" id="l6" style="top:277px;letter-spacing:0.068px;margin-right:0.068px">Descontos Recebidos</span>
<span class="nt" style="top:277px">3301</span>
<div class="tx" style="top:277px"><span id="c6" style="letter-spacing:-0.014px">3.4.4.03.0001 | </span><span id="n6" class="nm" style="transform:scaleX(0.9031)">DESCONTOS RECEBIDOS</span></div>
<span class="lbl" id="l7" style="top:300px;letter-spacing:-0.228px;margin-right:-0.228px">Crédito Presumido ICMS</span>
<span class="nt" style="top:299px">3113</span>
<div class="tx" style="top:299px"><span id="c7" style="letter-spacing:-0.014px">3.3.1.05.0003 | </span><span id="n7" class="nm" style="transform:scaleX(0.9014)">( - ) CREDITOS DE ICMS</span></div>
<span class="lbl" id="l8" style="top:322px;letter-spacing:-0.006px;margin-right:-0.006px">Receitas de Frete Cortesia</span>
<span class="nt" style="top:322px">3015</span>
<div class="tx" style="top:322px"><span id="c8" style="letter-spacing:-0.014px">3.1.1.01.0015 | </span><span id="n8" class="nm" style="transform:scaleX(0.8943)">FRETE CORTESIA</span></div>
<span class="lbl" id="l9" style="top:344px;letter-spacing:-0.094px;margin-right:-0.094px">Receita de Pedágio</span>
<span class="lbl" id="l10" style="top:366px;letter-spacing:-0.009px;margin-right:-0.009px">Receita de Seguro</span>
<span class="nt" style="top:367px">0</span>
<span class="lbl" id="l11" style="top:388px;letter-spacing:-0.377px;margin-right:-0.377px">Débito CPRB</span>
<span class="nt" style="top:389px">3391</span>
<div class="tx" style="top:389px"><span id="c11" style="letter-spacing:-0.014px">3.6.1.01.0001 | </span><span id="n11" class="nm" style="transform:scaleX(0.9194)">CONTRIBUICAO SOCIAL LUCRO LIQUIDO</span></div>
<span class="lbl" id="l12" style="top:410px;letter-spacing:-0.31px;margin-right:-0.31px">Crédito CPRB</span>
<span class="nt" style="top:411px">1261</span>
<div class="tx" style="top:411px"><span id="c12" style="letter-spacing:-0.014px">1.1.2.06.0012 | </span><span id="n12" class="nm" style="transform:scaleX(0.9168)">CONTRIBUICAO SINDICAL A RECUPERAR</span></div>
<span class="lbl" id="l13" style="top:434px;letter-spacing:0.037px;margin-right:0.037px">Cooperado - Receitas de Fretes Interestaduais</span>
<span class="nt" style="top:433px">3003</span>
<div class="tx" style="top:433px"><span id="c13" style="letter-spacing:-0.014px">3.1.1.01.0003 | </span><span id="n13" class="nm" style="transform:scaleX(0.9372)">VENDAS DE SERVIÇOS A VISTA</span></div>
<span class="lbl" id="l14" style="top:457px;letter-spacing:-0.005px;margin-right:-0.005px">Cooperado - Receitas de Fretes Intermunicipais</span>
<span class="nt" style="top:456px">3006</span>
<div class="tx" style="top:456px"><span id="c14" style="letter-spacing:-0.014px">3.1.1.01.0006 | </span><span id="n14" class="nm" style="transform:scaleX(0.9317)">SERVIÇOS DE ARMAZENAGEM</span></div>
<span class="lbl" id="l15" style="top:480px;letter-spacing:-0.001px;margin-right:-0.001px">Cooperado - Receitas de Fretes Municipais</span>
<span class="nt" style="top:479px">3005</span>
<div class="tx" style="top:479px"><span id="c15" style="letter-spacing:-0.014px">3.1.1.01.0005 | </span><span id="n15" class="nm" style="transform:scaleX(0.9219)">SERVIÇOS DE LOGISTICA</span></div>
<span class="lbl" id="l16" style="top:503px;letter-spacing:0.017px;margin-right:0.017px">Cooperado - Receitas de Fretes Internacionais</span>
<span class="nt" style="top:502px">3009</span>
<div class="tx" style="top:502px"><span id="c16" style="letter-spacing:-0.014px">3.1.1.01.0009 | </span><span id="n16" class="nm" style="transform:scaleX(0.9196)">RECEITA DE TAXAS  - CTe</span></div>
</body></html>
